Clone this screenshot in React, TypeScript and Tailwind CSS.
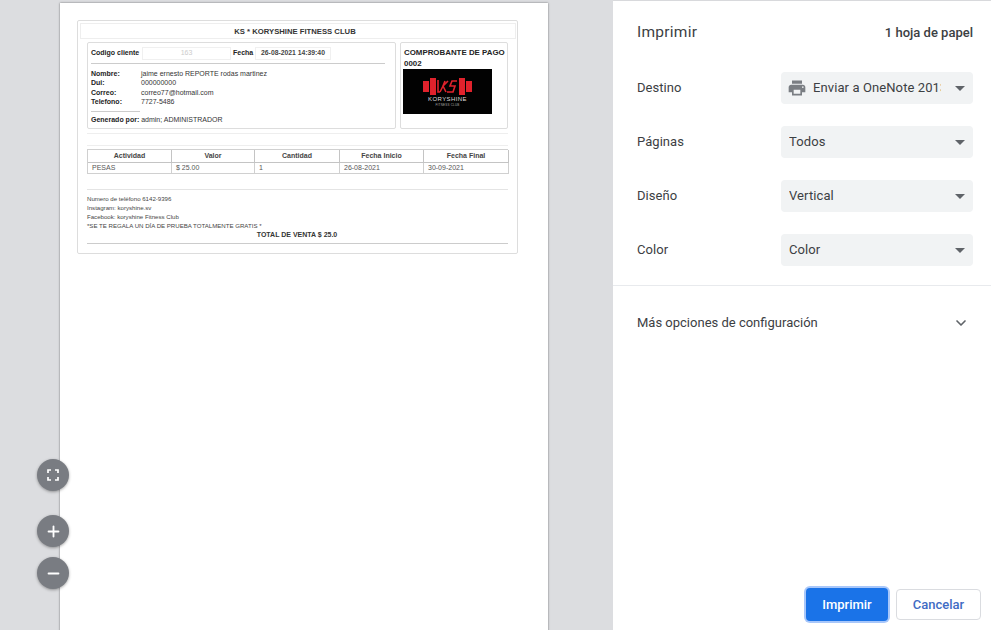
import { ChevronDown, Minus, Plus } from "lucide-react";

const SETTINGS = [
  { label: "Destino", value: "Enviar a OneNote 2013", printer: true },
  { label: "Páginas", value: "Todos" },
  { label: "Diseño", value: "Vertical" },
  { label: "Color", value: "Color" },
];

const COLUMNS = ["Actividad", "Valor", "Cantidad", "Fecha Inicio", "Fecha Final"];
const ROW = ["PESAS", "$ 25.00", "1", "26-08-2021", "30-09-2021"];

function Logo() {
  return (
    <div className="w-[89px] h-[45px] bg-black -ml-[1px] flex flex-col items-center pt-[9px]">
      <svg width="49" height="17" viewBox="0 0 49 17" className="shrink-0">
        <g fill="#e0202a">
          <rect x="0" y="3" width="6" height="11" />
          <rect x="7" y="0" width="6" height="17" />
          <rect x="36" y="0" width="6" height="17" />
          <rect x="43" y="3" width="6" height="11" />
        </g>
        <g fill="none" stroke="#e0202a" strokeWidth="1.6">
          <path d="M15 2v12h2" />
          <path d="M22 3l-2 5 -3 6M25 3l-5 5 3 6" />
          <path d="M34 3h-5l-2 5h5l-2 6h-6" />
        </g>
      </svg>
      <div className="mt-[1px] text-[6px] leading-[7px] text-[#dddddd] tracking-[0.4px] whitespace-nowrap">KORYSHINE</div>
      <div className="text-[3px] leading-[4px] text-[#aaaaaa] tracking-[0.2px] whitespace-nowrap">FITNESS CLUB</div>
    </div>
  );
}

function Receipt() {
  return (
    <div className="w-[441px] h-[234px] ml-[17px] border border-[#dddddd] rounded-[2px] px-[2px] pt-[2px] opacity-[0.99] font-['Liberation_Sans',Arial,sans-serif] text-[#333333]">
      <div className="h-[16px] mr-[-1px] pt-[1px] pr-[6px] border border-[#eeeeee] flex items-center justify-center text-[7.7px] font-bold">
        KS * KORYSHINE FITNESS CLUB
      </div>
      <div className="px-[7px] pt-[3px]">
        <div className="flex gap-[4px] h-[87px]">
          <div className="w-[309px] border border-[#dddddd] rounded-[2px] pl-[3px] pt-[3px]">
            <div className="flex items-center h-[15px] text-[7px] font-bold text-[#222222]">
              <span className="w-[51px]">Codigo cliente</span>
              <span className="w-[89px] h-[13px] border border-[#f0f0f0] flex items-center justify-center font-normal text-[#cccccc]">163</span>
              <span className="ml-[2px] w-[22px]">Fecha</span>
              <span className="w-[76px] h-[13px] border border-[#f0f0f0] flex items-center justify-center text-[#444444] text-[6.8px]">26-08-2021 14:39:40</span>
            </div>
            <div className="mt-[2px] mr-[10px] border-t border-[#cccccc]"></div>
            <div className="mt-[5px] text-[7px] leading-[9.4px]">
              {[
                ["Nombre:", "jaime ernesto REPORTE rodas martinez"],
                ["Dui:", "000000000"],
                ["Correo:", "correo77@hotmail.com"],
                ["Telefono:", "7727-5486"],
              ].map(([k, v]) => (
                <div key={k} className="flex">
                  <span className="w-[50px] font-bold text-[#222222]">{k}</span>
                  <span>{v}</span>
                </div>
              ))}
            </div>
            <div className="mt-[4px] w-[49px] border-t border-[#cccccc]"></div>
            <div className="mt-[3px] text-[7px] leading-[9px]">
              <b className="text-[#222222]">Generado por:</b> admin; ADMINISTRADOR
            </div>
          </div>
          <div className="w-[108px] border border-[#dddddd] rounded-[2px] pl-[3px] pt-[4px]">
            <div className="text-[7.9px] leading-[11px] font-bold text-[#222222] whitespace-nowrap">
              COMPROBANTE DE PAGO
              <br />
              0002
            </div>
            <Logo />
          </div>
        </div>
        <div className="mt-[4px] border-t border-[#eeeeee]"></div>
        <div className="mt-[11px] border-t border-[#eeeeee]"></div>
        <div className="mt-[3px] grid grid-cols-[84px_83px_85px_84px_85px] border-t border-l border-[#d0d0d0] text-[7px]">
          {COLUMNS.map((c) => (
            <div key={c} className="h-[13px] border-r border-b border-[#c4c4c4] flex items-center justify-center font-bold text-[#444444]">
              {c}
            </div>
          ))}
          {ROW.map((c) => (
            <div key={c} className="h-[11px] border-r border-b border-[#d0d0d0] flex items-center pl-[4px] text-[#555555]">
              {c}
            </div>
          ))}
        </div>
        <div className="mt-[15px] border-t border-[#e4e4e4]"></div>
        <div className="mt-[4px] text-[6.1px] leading-[9px] text-[#444444] whitespace-nowrap">
          <div>Numero de teléfono 6142-9396</div>
          <div>Instagram: koryshine.sv</div>
          <div>Facebook: koryshine Fitness Club</div>
          <div>*SE TE REGALA UN DÍA DE PRUEBA TOTALMENTE GRATIS *</div>
        </div>
        <div className="text-center text-[7px] leading-[9px] pr-[1px] font-bold text-[#333333]">TOTAL DE VENTA $ 25.0</div>
        <div className="mt-[4px] border-t border-[#cccccc]"></div>
      </div>
    </div>
  );
}

function ZoomButton({ children, className }: { children: React.ReactNode; className: string }) {
  return (
    <button className={`absolute left-[37px] w-[32px] h-[32px] rounded-full bg-[#797c82] shadow-[0_1px_3px_rgba(0,0,0,0.35)] flex items-center justify-center text-white ${className}`}>
      {children}
    </button>
  );
}

function Caret() {
  return <span className="ml-auto mr-[8px] w-0 h-0 border-x-[5px] border-x-transparent border-t-[5px] border-t-[#5f6368] shrink-0"></span>;
}

export default function App() {
  return (
    <div className="relative flex w-[991px] h-[630px] overflow-hidden font-['Roboto',sans-serif]">
      <div className="w-[613px] h-full bg-[#dcdde0] pl-[60px] pt-[3px] shrink-0">
        <div className="w-[488px] h-[700px] bg-white pt-[17px] shadow-[0_0_2px_rgba(0,0,0,0.5)]">
          <Receipt />
        </div>
      </div>

      <ZoomButton className="top-[459px]">
        <svg width="12" height="12" viewBox="0 0 12 12" fill="none" stroke="currentColor" strokeWidth="1.7">
          <path d="M1 4V1h3M8 1h3v3M11 8v3H8M4 11H1V8" />
        </svg>
      </ZoomButton>
      <ZoomButton className="top-[515px]">
        <Plus size={17} strokeWidth={2.6} />
      </ZoomButton>
      <ZoomButton className="top-[557px]">
        <Minus size={17} strokeWidth={2.6} />
      </ZoomButton>

      <div className="flex-1 flex flex-col bg-white border-t border-[#d8d9dc] text-[#3c4043]">
        <div className="flex items-center justify-between h-[63px] pl-[24px] pr-[18px]">
          <h1 className="text-[15.5px] font-normal tracking-[0.25px] text-[#3c4043]">Imprimir</h1>
          <span className="text-[13px] font-medium text-[#3c4043]">1 hoja de papel</span>
        </div>
        <div className="flex flex-col gap-[22px] pt-[8px] pl-[24px] pr-[18px] pb-[19px] border-b border-[#e8eaed]">
          {SETTINGS.map((s) => (
            <div key={s.label} className="flex items-center justify-between">
              <span className="text-[13px] tracking-[0.05px]">{s.label}</span>
              <div className="w-[192px] h-[32px] rounded-[4px] bg-[#f1f3f4] flex items-center pl-[8px] text-[13px] tracking-[0.1px]">
                {s.printer && (
                  <svg width="20" height="20" viewBox="0 0 24 24" className="shrink-0 mr-[6px] -ml-[2px]" fill="#7a7e83">
                    <path d="M19 8H5c-1.66 0-3 1.34-3 3v6h4v4h12v-4h4v-6c0-1.66-1.34-3-3-3zm-3 11H8v-5h8v5zm3-7c-.55 0-1-.45-1-1s.45-1 1-1 1 .45 1 1-.45 1-1 1zm-1-9H6v4h12V3z" />
                  </svg>
                )}
                <span className="w-[128px] overflow-hidden whitespace-nowrap shrink-0">{s.value}</span>
                <Caret />
              </div>
            </div>
          ))}
        </div>
        <div className="flex items-center justify-between h-[74px] pl-[24px] pr-[22px]">
          <span className="text-[13px]">Más opciones de configuración</span>
          <ChevronDown size={16} strokeWidth={2.5} className="text-[#5f6368]" />
        </div>
        <div className="mt-auto flex justify-end items-center gap-[8px] pr-[10px] pb-[9px]">
          <button className="w-[82px] h-[33px] rounded-[4px] bg-[#1a73e8] ring-2 ring-[#a8c7fa] text-white text-[13px] font-medium">
            Imprimir
          </button>
          <button className="w-[85px] h-[31px] rounded-[4px] border border-[#dadce0] bg-white text-[#3f6cc4] text-[13px] font-medium">
            Cancelar
          </button>
        </div>
      </div>
    </div>
  );
}
